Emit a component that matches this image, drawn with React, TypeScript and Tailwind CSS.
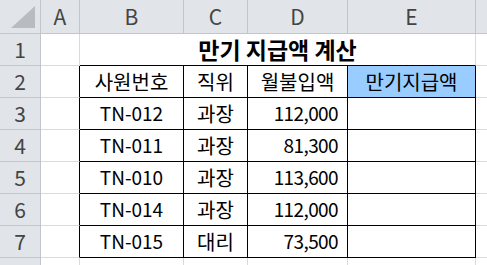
import React from 'react';

const cols = ['A', 'B', 'C', 'D', 'E'];
const colWidths = ['w-[39px]', 'w-[104px]', 'w-[64px]', 'w-[100px]', 'w-[128px]'];

const rows = [
  ['TN-012', '과장', '112,000'],
  ['TN-011', '과장', '81,300'],
  ['TN-010', '과장', '113,600'],
  ['TN-014', '과장', '112,000'],
  ['TN-015', '대리', '73,500'],
];

const font = { fontFamily: '"Noto Sans CJK KR", "Noto Sans", sans-serif' };

const RowHead: React.FC<{ n?: number }> = ({ n }) => (
  <div className="w-[41px] h-[32px] shrink-0 bg-[#e1e4e8] border-r border-b border-[#c2c5c9] flex items-center justify-center text-[#444] text-[21px]">
    {n}
  </div>
);

export default function App() {
  return (
    <div className="w-[487px] h-[265px] overflow-hidden bg-white text-[20px] text-black" style={font}>
      {/* column headers */}
      <div className="flex h-[34px]">
        <div className="w-[41px] shrink-0 bg-[#e1e4e8] border-r border-b border-[#c2c5c9] relative">
          <svg width="40" height="33" className="absolute left-0 top-0">
            <polygon points="35,6 35,28 11,28" fill="#b8bcc1" />
          </svg>
        </div>
        {cols.map((c, i) => (
          <div
            key={c}
            className={`${colWidths[i]} shrink-0 bg-[#e1e4e8] border-r border-b border-[#c2c5c9] flex items-center justify-center text-[#444] text-[21px]`}
          >
            {c}
          </div>
        ))}
        <div className="flex-1 bg-[#e1e4e8] border-b border-[#c2c5c9]" />
      </div>

      {/* row 1: title */}
      <div className="flex h-[32px]">
        <RowHead n={1} />
        <div className="w-[39px] shrink-0 border-r border-b border-[#dadada]" />
        <div className="w-[396px] shrink-0 border-r border-b border-[#dadada] border-b-black flex items-center justify-center font-bold text-[23px]">
          만기 지급액 계산
        </div>
        <div className="flex-1 border-b border-[#dadada]" />
      </div>

      {/* row 2: table header */}
      <div className="flex h-[32px]">
        <RowHead n={2} />
        <div className="w-[39px] shrink-0 border-r border-b border-[#dadada] border-r-black" />
        <div className="w-[104px] shrink-0 border-r border-b border-black flex items-center justify-center">사원번호</div>
        <div className="w-[64px] shrink-0 border-r border-b border-black flex items-center justify-center">직위</div>
        <div className="w-[100px] shrink-0 border-r border-b border-black flex items-center justify-center">월불입액</div>
        <div className="w-[128px] shrink-0 border-r border-b border-black bg-[#99ccff] flex items-center justify-center">만기지급액</div>
        <div className="flex-1 border-b border-[#dadada]" />
      </div>

      {rows.map((r, i) => (
        <div key={r[0]} className="flex h-[32px]">
          <RowHead n={i + 3} />
          <div className="w-[39px] shrink-0 border-r border-b border-[#dadada] border-r-black" />
          <div className="w-[104px] shrink-0 border-r border-b border-black flex items-center justify-center text-[19px]">{r[0]}</div>
          <div className="w-[64px] shrink-0 border-r border-b border-black flex items-center justify-center">{r[1]}</div>
          <div className="w-[100px] shrink-0 border-r border-b border-black flex items-center justify-end pr-[9px] text-[19px] tracking-[-0.6px]">{r[2]}</div>
          <div className="w-[128px] shrink-0 border-r border-b border-black" />
          <div className="flex-1 border-b border-[#dadada]" />
        </div>
      ))}

      <div className="flex h-[32px]">
        <RowHead />
        <div className="w-[39px] shrink-0 border-r border-[#dadada]" />
        <div className="w-[104px] shrink-0 border-r border-[#dadada]" />
        <div className="w-[64px] shrink-0 border-r border-[#dadada]" />
        <div className="w-[100px] shrink-0 border-r border-[#dadada]" />
        <div className="w-[128px] shrink-0 border-r border-[#dadada]" />
      </div>
    </div>
  );
}
